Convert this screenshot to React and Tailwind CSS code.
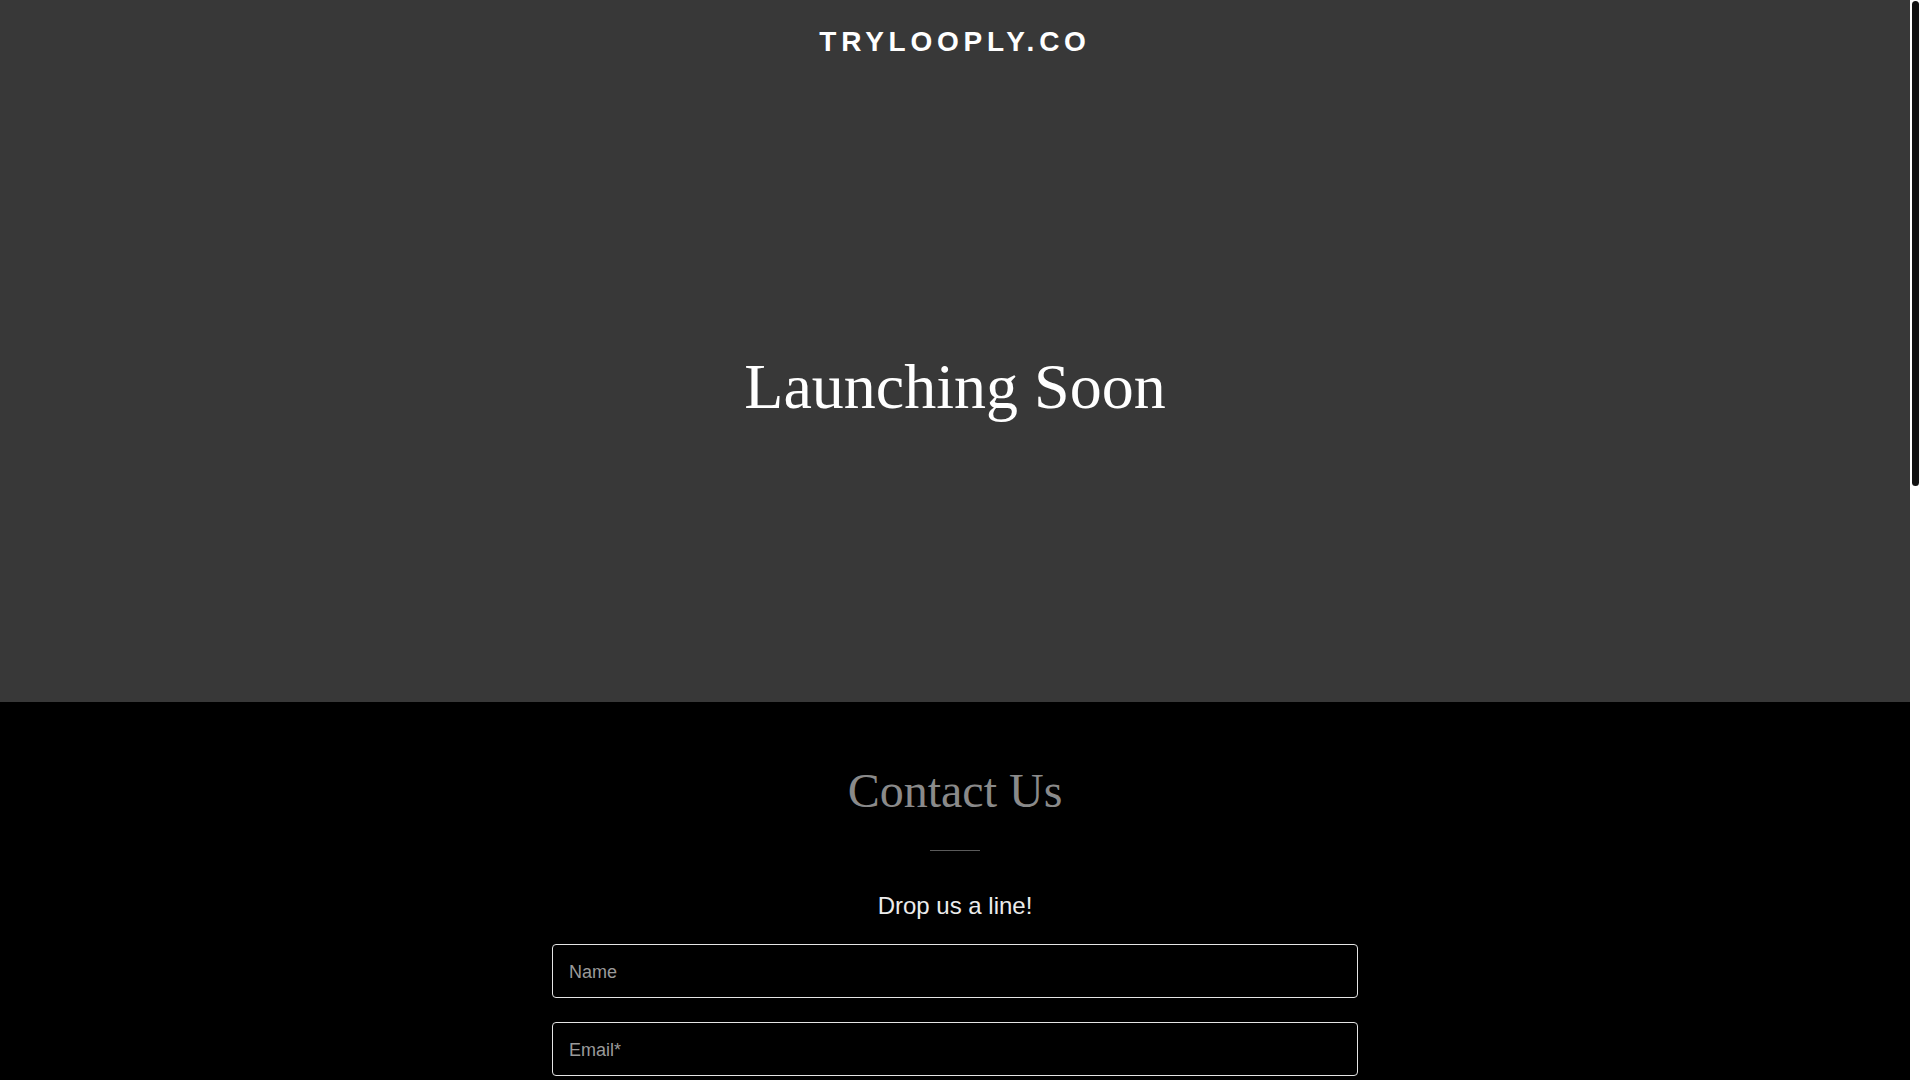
import React from 'react';

const sans = { fontFamily: '"Liberation Sans", Arial, sans-serif' };

const App = () => {
  const inputClass = "w-full h-[54px] px-4 pt-[4px] bg-black border border-[#e5e5e5] rounded-[4px] text-[18px] text-white placeholder:text-[#9a9a9a] outline-none font-['Liberation_Sans',Arial,sans-serif]";

  return (
    <div className="h-screen w-full flex overflow-hidden bg-black">
      <div className="flex-1 h-full overflow-y-auto [scrollbar-width:none]">

        {/* Hero */}
        <section className="h-[702px] bg-[#383838] flex flex-col">
          <header className="h-[80px] pt-[3px] flex items-center justify-center">
            <h1 className="text-[28px] font-bold text-white tracking-[0.17em] leading-none font-['Liberation_Sans',Arial,sans-serif]">TRYLOOPLY.CO</h1>
          </header>
          <div className="flex-1 flex items-center justify-center pb-[8px]">
            <h2 className="text-[64px] text-white leading-[1.2] font-['Liberation_Serif','Times_New_Roman',serif]">Launching Soon</h2>
          </div>
        </section>

        {/* Contact */}
        <section className="bg-black pt-[60px] pb-[120px] flex flex-col items-center">
          <h2 className="text-[48px] leading-[1.2] text-[#8a8a8a] font-['Liberation_Serif','Times_New_Roman',serif]">Contact Us</h2>
          <div className="w-[50px] h-px bg-[#5a5a5a] mt-[30px]" />
          <p className="mt-[37px] text-[24px] leading-[1.5] text-[#ececec]" style={sans}>Drop us a line!</p>

          <form className="w-[806px] mt-[20px] flex flex-col gap-6" onSubmit={e => e.preventDefault()}>
            <input placeholder="Name" className={inputClass} />
            <input placeholder="Email*" className={inputClass} />
            <textarea placeholder="Message" className="w-full h-[140px] px-4 py-3 bg-black border border-[#e5e5e5] rounded-[4px] text-[18px] text-white placeholder:text-[#9a9a9a] outline-none resize-none font-['Liberation_Sans',Arial,sans-serif]" />
            <p className="text-[14px] text-[#9a9a9a] text-center" style={sans}>This site is protected by reCAPTCHA and the Google Privacy Policy and Terms of Service apply.</p>
            <button type="submit" className="w-full h-[56px] bg-white text-black text-[16px] font-bold tracking-[0.1em] uppercase rounded-[4px]" style={sans}>Send</button>
          </form>

          <div className="mt-[200px] w-[806px] flex flex-col items-center gap-4">
            <p className="text-[22px] text-[#cfcfcf]" style={sans}>Better yet, see us in person!</p>
            <p className="text-[16px] text-[#9a9a9a] text-center" style={sans}>We love our customers, so feel free to visit during normal business hours.</p>
          </div>
        </section>

        {/* Footer */}
        <footer className="bg-[#1a1a1a] py-[80px] flex flex-col items-center gap-6">
          <p className="text-[15px] text-[#a0a0a0]" style={sans}>Copyright © 2024 trylooply.co - All Rights Reserved.</p>
          <p className="text-[15px] text-[#a0a0a0]" style={sans}>Powered by GoDaddy</p>
        </footer>
      </div>

      {/* Scrollbar */}
      <div className="w-[10px] h-full bg-white shrink-0 pt-px pl-[2px]">
        <div className="w-[7px] h-[485px] bg-[#111111] rounded-full" />
      </div>
    </div>
  );
};

export default App;
